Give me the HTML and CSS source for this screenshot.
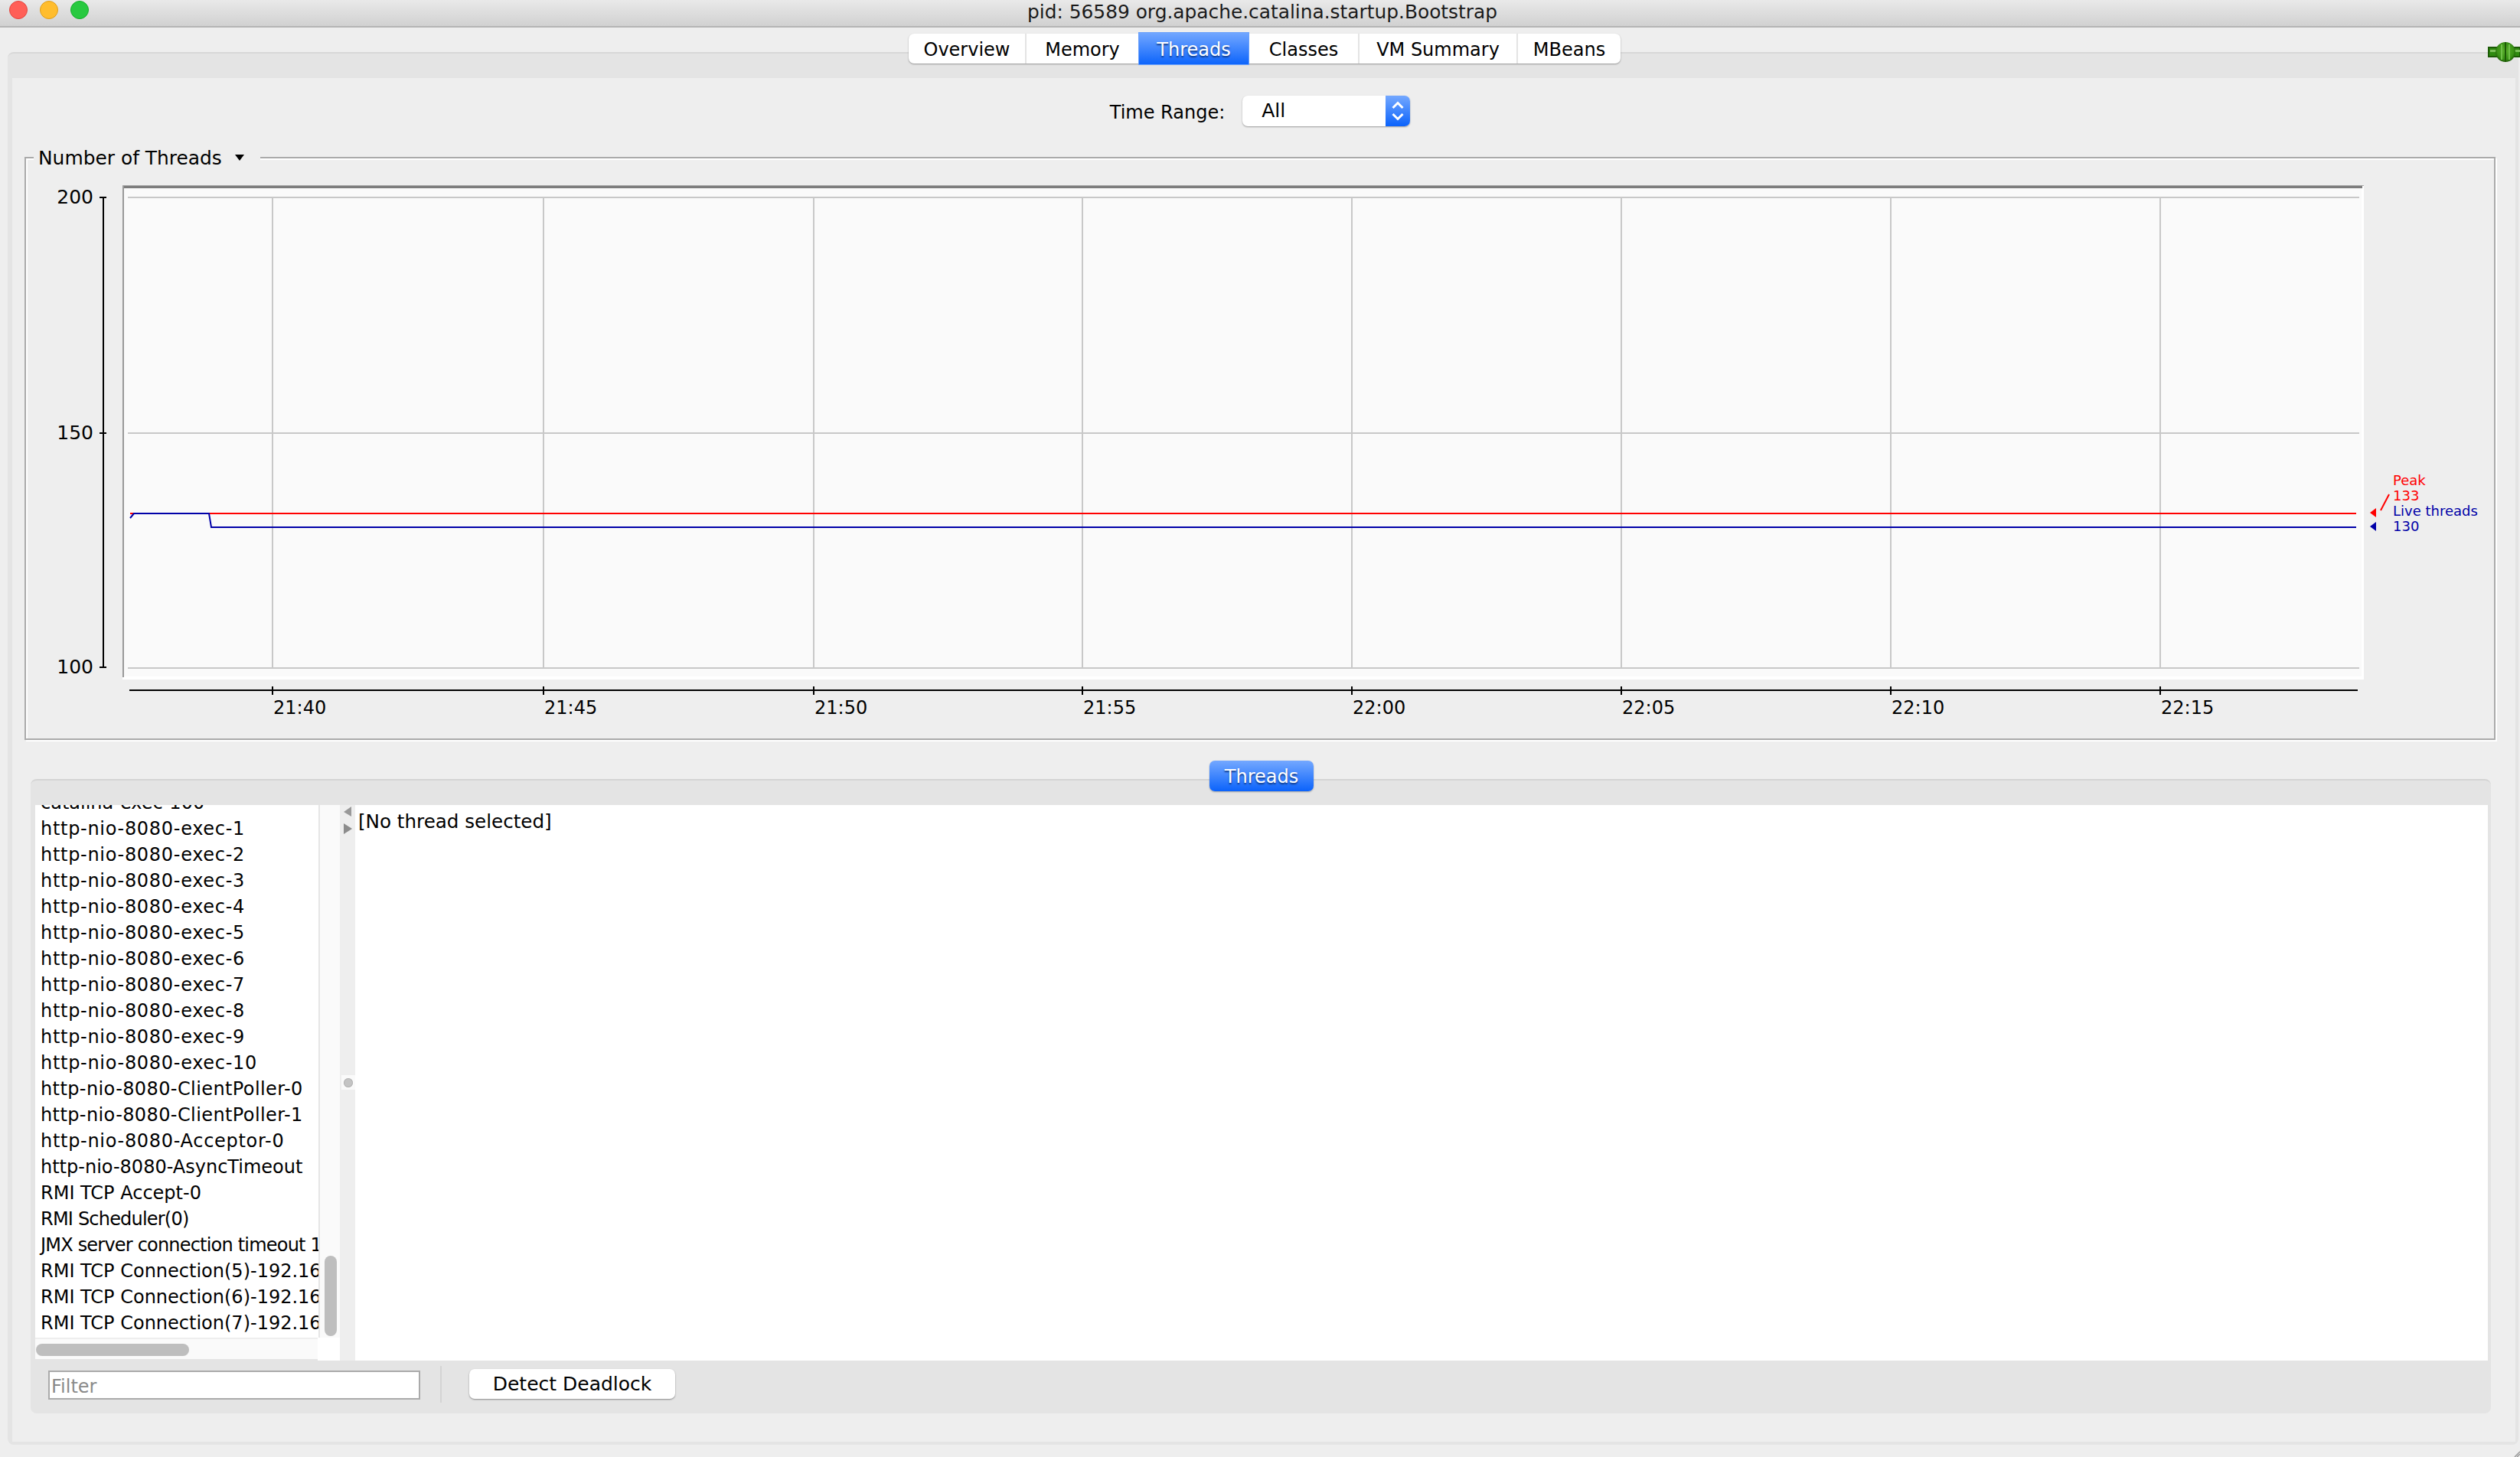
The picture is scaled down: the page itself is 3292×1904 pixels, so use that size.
FILE: index.html
```html
<!DOCTYPE html>
<html lang="en">
<head>
    <meta charset="UTF-8">
    <meta name="viewport" content="width=device-width, initial-scale=1.0">
    <title>Java Monitoring &amp; Management Console</title>
    <link rel="stylesheet" href="styles.css">
</head>
<body>

<!-- Window title bar -->
<div class="titlebar">
    <div class="lights">
        <span class="light red"></span>
        <span class="light yellow"></span>
        <span class="light green"></span>
    </div>
    <div class="window-title">pid: 56589 org.apache.catalina.startup.Bootstrap</div>
</div>

<div class="pane">
    <div class="tabs">
        <div class="tab">Overview</div>
        <div class="tab">Memory</div>
        <div class="tab selected">Threads</div>
        <div class="tab">Classes</div>
        <div class="tab">VM Summary</div>
        <div class="tab">MBeans</div>
    </div>

    <!-- Connection status icon -->
    <svg class="plug" viewBox="0 0 42 28" width="42" height="28">
        <defs>
            <radialGradient id="plugGlobe" cx="0.5" cy="0.45" r="0.55">
                <stop offset="0" stop-color="#5bb02c"/>
                <stop offset="0.75" stop-color="#3a9216"/>
                <stop offset="1" stop-color="#1f5c08"/>
            </radialGradient>
        </defs>
        <rect x="1" y="8" width="41" height="12" fill="#2f8a10" stroke="#1c5a06" stroke-width="2"/>
        <rect x="3" y="11" width="39" height="3" fill="#7cc05a"/>
        <circle cx="23" cy="14" r="13" fill="url(#plugGlobe)"/>
        <rect x="22" y="1" width="2" height="26" fill="#1c5a06"/>
        <rect x="17" y="4" width="2" height="20" fill="#6fc048"/>
        <rect x="27" y="4" width="2" height="20" fill="#6fc048"/>
    </svg>

    <div class="inner">
        <div class="range-row">
            <label class="range-label">Time Range:</label>
            <div class="select">
                <span class="select-value">All</span>
                <span class="select-arrows">
                    <svg viewBox="0 0 32 40" width="32" height="40">
                        <path d="M9.5 16l6.5-6.5 6.5 6.5M9.5 24l6.5 6.5 6.5-6.5" fill="none" stroke="#fff" stroke-width="3"/>
                    </svg>
                </span>
            </div>
        </div>

        <div class="chart-box">
            <div class="chart-title">
                <span>Number of Threads</span>
                <svg viewBox="0 0 14 10" width="14" height="10"><path d="M1 1h12L7 9z" fill="#000"/></svg>
            </div>

            <!-- viewBox uses page coordinates, so chart numbers read straight off the screenshot -->
            <svg class="chart" viewBox="34 207 3224 758" width="3224" height="758">
                <rect x="160" y="242" width="2928" height="646" fill="#fff"/>
                <rect x="160" y="242" width="2925" height="642" fill="#fafafa"/>
                <path d="M160 242.5H3088" stroke="#a8a8a8" stroke-width="1"/>
                <path d="M160 244.5H3086" stroke="#7c7c7c" stroke-width="3"/>
                <path d="M161 243V885" stroke="#999" stroke-width="2"/>

                <g class="grid">
                    <path d="M167 258H3082M167 566H3082M167 873H3082"/>
                    <path d="M356 258V873M710 258V873M1063 258V873M1414 258V873M1766 258V873M2118 258V873M2470 258V873M2822 258V873"/>
                </g>

                <path d="M170 671H3078" class="line-peak"/>
                <path d="M170 677L175 671H273L276 689H3078" class="line-live"/>

                <g class="axis">
                    <path d="M135 258V872M130 258H139M130 566H139M130 872H139"/>
                    <path d="M169 902H3080" stroke-width="3"/>
                    <path d="M356 897V908M710 897V908M1063 897V908M1414 897V908M1766 897V908M2118 897V908M2470 897V908M2822 897V908"/>
                </g>

                <g class="labels">
                    <text class="y-label" x="122" y="266" text-anchor="end">200</text>
                    <text class="y-label" x="122" y="574" text-anchor="end">150</text>
                    <text class="y-label" x="122" y="880" text-anchor="end">100</text>
                    <text x="357" y="933">21:40</text>
                    <text x="711" y="933">21:45</text>
                    <text x="1064" y="933">21:50</text>
                    <text x="1415" y="933">21:55</text>
                    <text x="1767" y="933">22:00</text>
                    <text x="2119" y="933">22:05</text>
                    <text x="2471" y="933">22:10</text>
                    <text x="2823" y="933">22:15</text>
                </g>

                <g class="legend">
                    <path d="M3096 670l8-6v12z" fill="#f00"/>
                    <path d="M3096 688l8-6v12z" fill="#0000a8"/>
                    <path d="M3110 667l11-21" stroke="#f00" stroke-width="2"/>
                    <text x="3126" y="634" fill="#f00">Peak</text>
                    <text x="3126" y="654" fill="#f00">133</text>
                    <text x="3126" y="674" fill="#0000a8">Live threads</text>
                    <text x="3126" y="694" fill="#0000a8">130</text>
                </g>
            </svg>
        </div>

        <div class="lower-pane">
            <div class="lower-tab">Threads</div>

            <div class="split">
                <div class="list-col">
                    <div class="list-row">
                        <div class="list">
                            <div class="list-items">
                                <div class="item">catalina-exec-100</div>
                                <div class="item wide">http-nio-8080-exec-1</div>
                                <div class="item wide">http-nio-8080-exec-2</div>
                                <div class="item wide">http-nio-8080-exec-3</div>
                                <div class="item wide">http-nio-8080-exec-4</div>
                                <div class="item wide">http-nio-8080-exec-5</div>
                                <div class="item wide">http-nio-8080-exec-6</div>
                                <div class="item wide">http-nio-8080-exec-7</div>
                                <div class="item wide">http-nio-8080-exec-8</div>
                                <div class="item wide">http-nio-8080-exec-9</div>
                                <div class="item wide">http-nio-8080-exec-10</div>
                                <div class="item mid">http-nio-8080-ClientPoller-0</div>
                                <div class="item mid">http-nio-8080-ClientPoller-1</div>
                                <div class="item wide">http-nio-8080-Acceptor-0</div>
                                <div class="item">http-nio-8080-AsyncTimeout</div>
                                <div class="item">RMI TCP Accept-0</div>
                                <div class="item narrow">RMI Scheduler(0)</div>
                                <div class="item narrow">JMX server connection timeout 1</div>
                                <div class="item">RMI TCP Connection(5)-192.16</div>
                                <div class="item">RMI TCP Connection(6)-192.16</div>
                                <div class="item">RMI TCP Connection(7)-192.16</div>
                            </div>
                        </div>
                        <div class="vscroll"><div class="vthumb"></div></div>
                    </div>
                    <div class="hscroll-row">
                        <div class="hscroll"><div class="hthumb"></div></div>
                        <div class="corner"></div>
                    </div>
                </div>

                <div class="divider">
                    <svg class="divider-arrows" viewBox="0 0 14 38" width="14" height="38">
                        <path d="M12 1v13L2 8z" fill="#999"/>
                        <path d="M2 23v14l11-7z" fill="#8c8c8c"/>
                    </svg>
                    <div class="divider-knob"><span></span></div>
                </div>

                <div class="details">[No thread selected]</div>
            </div>

            <div class="footer">
                <div class="filter">Filter</div>
                <div class="footer-sep"></div>
                <button class="deadlock">Detect Deadlock</button>
            </div>
        </div>
    </div>
</div>

<svg class="grip" viewBox="0 0 8 8" width="8" height="8">
    <path d="M8 1L1 8M8 4L4 8" stroke="#999" stroke-width="1.5"/>
</svg>

</body>
</html>
```

FILE: styles.css
```css
html, body {
    margin: 0;
    height: 100%;
}
body {
    width: 3292px;
    height: 1904px;
    overflow: hidden;
    background-color: #eee;
    color: #000;
    font-family: "DejaVu Sans", sans-serif;
    font-size: 24px;
    position: relative;
}

/* title bar */
.titlebar {
    height: 34px;
    border-bottom: 2px solid #b4b4b4;
    background: linear-gradient(#e9e9e9, #d1d1d1);
    display: flex;
    align-items: center;
    justify-content: center;
    position: relative;
}
.lights {
    position: absolute;
    left: 12px;
    top: 1px;
    display: flex;
    gap: 16px;
}
.light {
    width: 24px;
    height: 24px;
    border-radius: 50%;
    box-sizing: border-box;
}
.red { background-color: #ff5f57; border: 1px solid #e2463f; }
.yellow { background-color: #ffbd2e; border: 1px solid #e09e1a; }
.green { background-color: #28c940; border: 1px solid #14ae2a; }
.window-title {
    font-size: 24.85px;
    margin-left: 6px;
    margin-top: -4px;
    color: #1a1a1a;
}

/* outer tabbed pane */
.pane {
    position: relative;
    margin: 32px 2px 0 10px;
    height: 1820px;
    box-sizing: border-box;
    background-color: #e4e4e4;
    border-top: 2px solid #d8d8d8;
    border-radius: 8px;
    padding: 0 4px 4px 6px;
    display: flex;
    flex-direction: column;
}
.tabs {
    display: grid;
    grid-template-columns: 152px 148px 145px 142px 207px 136px;
    align-self: center;
    height: 39px;
    margin-top: -26px;
    margin-bottom: 19px;
    margin-left: 2px;
    background-color: #fff;
    border-radius: 7px;
    box-shadow: 0 1px 2px rgba(0, 0, 0, 0.35);
}
.tab {
    display: flex;
    align-items: center;
    justify-content: center;
    padding-top: 2px;
    border-left: 2px solid #e4e4e4;
}
.tab:first-child { border-left: none; }
.tab.selected {
    border: none;
    margin: -2px 0;
    color: #fff;
    background: linear-gradient(#74a8ff, #0b63fb);
    box-shadow: inset 0 0 0 1px #6aa0fb;
    text-shadow: 0 2px 2px #123c88;
}
.tab.selected + .tab { border-left: none; }
.plug {
    position: absolute;
    right: -2px;
    top: -16px;
}

.inner {
    flex: 1;
    background-color: #eee;
    display: flex;
    flex-direction: column;
    min-height: 0;
}

/* time range */
.range-row {
    display: flex;
    align-items: center;
    justify-content: center;
    gap: 23px;
    padding-top: 23px;
    padding-right: 10px;
}
.range-label {
    padding-top: 3px;
}
.select {
    width: 219px;
    height: 40px;
    border-radius: 7px;
    background-color: #fff;
    box-shadow: 0 1px 2px rgba(0, 0, 0, 0.35);
    display: flex;
    overflow: hidden;
}
.select-value {
    flex: 1;
    padding-left: 25px;
    line-height: 40px;
    font-size: 25px;
}
.select-arrows {
    width: 32px;
    background: linear-gradient(#74a8ff, #0b63fb);
}

/* chart */
.chart-box {
    position: relative;
    margin: 40px 26px 0 16px;
    height: 762px;
    box-sizing: border-box;
    border: 2px solid #aaa;
    box-shadow: inset 2px 2px 0 #fff, 2px 2px 0 #fff;
}
.chart-title {
    position: absolute;
    left: 10px;
    top: -18px;
    padding: 0 10px 0 6px;
    height: 34px;
    width: 296px;
    box-sizing: border-box;
    background-color: #eee;
    display: flex;
    align-items: center;
    gap: 16px;
    font-size: 24.9px;
}
.chart {
    display: block;
}
.grid path {
    fill: none;
    stroke: #c8c8c8;
    stroke-width: 2;
}
.line-peak {
    fill: none;
    stroke: #f00;
    stroke-width: 2;
}
.line-live {
    fill: none;
    stroke: #0000a8;
    stroke-width: 2;
}
.axis path {
    fill: none;
    stroke: #000;
    stroke-width: 2;
}
.labels text {
    font-size: 24px;
    font-family: "DejaVu Sans", sans-serif;
}
.labels .y-label {
    font-size: 25px;
}
.legend text {
    font-size: 18px;
    font-family: "DejaVu Sans", sans-serif;
}

/* threads section */
.lower-pane {
    margin: 51px 32px 0 24px;
    height: 829px;
    box-sizing: border-box;
    background-color: #e4e4e4;
    border-top: 2px solid #d4d4d4;
    border-radius: 8px;
    padding: 0 4px 0 6px;
    display: flex;
    flex-direction: column;
}
.lower-tab {
    align-self: center;
    width: 136px;
    height: 40px;
    box-sizing: border-box;
    padding-top: 2px;
    margin-top: -26px;
    margin-bottom: 18px;
    border-radius: 7px;
    color: #fff;
    background: linear-gradient(#74a8ff, #0b63fb);
    box-shadow: 0 1px 2px rgba(0, 0, 0, 0.3);
    text-shadow: 0 2px 2px #123c88;
    display: flex;
    align-items: center;
    justify-content: center;
}
.split {
    height: 726px;
    display: flex;
}
.list-col {
    width: 398px;
    display: flex;
    flex-direction: column;
}
.list-row {
    height: 696px;
    display: flex;
}
.list {
    width: 370px;
    background-color: #fff;
    border-right: 2px solid #e6e6e6;
    overflow: hidden;
}
.list-items {
    margin-top: -20px;
}
.item {
    height: 34px;
    line-height: 34px;
    padding-left: 7px;
    white-space: nowrap;
}
/* the screenshot's font runs hyphens wider and some names tighter */
.item.wide { letter-spacing: 0.7px; }
.item.mid { letter-spacing: 0.4px; }
.item.narrow { letter-spacing: -0.8px; }
.vscroll {
    width: 26px;
    background-color: #fafafa;
    position: relative;
}
.vthumb {
    position: absolute;
    left: 6px;
    top: 589px;
    width: 16px;
    height: 105px;
    border-radius: 8px;
    background-color: #bebebe;
}
.hscroll-row {
    flex: 1;
    display: flex;
}
.hscroll {
    width: 371px;
    box-sizing: border-box;
    background-color: #fafafa;
    border-top: 2px solid #eee;
    height: 28px;
    padding: 6px 0 0 1px;
}
.hthumb {
    width: 200px;
    height: 16px;
    border-radius: 8px;
    background-color: #bebebe;
}
.corner {
    width: 29px;
    background-color: #fff;
}
.divider {
    width: 20px;
    background-color: #eee;
    position: relative;
}
.divider-arrows {
    position: absolute;
    left: 3px;
    top: 1px;
}
.divider-knob {
    position: absolute;
    left: 2px;
    top: 353px;
    width: 18px;
    height: 19px;
    background-color: #fafafa;
    display: flex;
    align-items: center;
    justify-content: center;
}
.divider-knob span {
    width: 12px;
    height: 12px;
    border-radius: 50%;
    background-color: #c4c4c4;
    box-shadow: inset 0 0 0 1px #b4b4b4;
}
.details {
    flex: 1;
    background-color: #fff;
    padding: 5px 0 0 4px;
    line-height: 34px;
    font-size: 24.6px;
}
.footer {
    height: 69px;
    display: flex;
    align-items: flex-start;
}
.filter {
    margin: 13px 0 0 17px;
    width: 486px;
    height: 38px;
    box-sizing: border-box;
    border: 2px solid #aaa;
    background-color: #fff;
    color: #8a8a8a;
    padding-left: 2px;
    line-height: 38px;
}
.footer-sep {
    width: 2px;
    height: 48px;
    margin: 7px 36px 0 26px;
    background-color: #d4d4d4;
}
.deadlock {
    margin: 11px 0 0 0;
    width: 269px;
    height: 39px;
    border: none;
    border-radius: 7px;
    background-color: #fff;
    box-shadow: 0 1px 2px rgba(0, 0, 0, 0.4);
    font-family: "DejaVu Sans", sans-serif;
    font-size: 25px;
    color: #000;
    padding: 0;
}
.grip {
    position: absolute;
    right: 0;
    bottom: 0;
}
```
